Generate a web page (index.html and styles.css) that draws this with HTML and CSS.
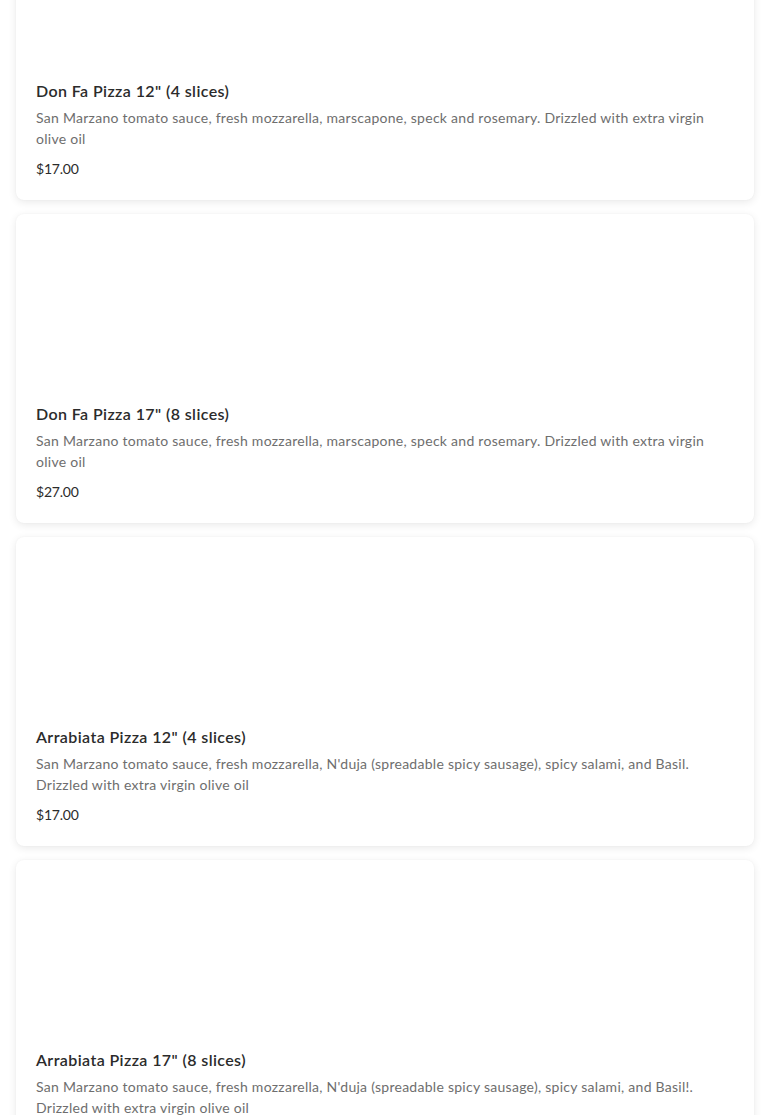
FILE: index.html
```html
<!DOCTYPE html>
<html>
<head>
<meta charset="utf-8">
<link rel="stylesheet" href="styles.css">
</head>
<body>
<div class="list">
  <div class="card">
    <div class="media"></div>
    <div class="body">
      <h3 class="title">Don Fa Pizza 12" (4 slices)</h3>
      <p class="desc">San Marzano tomato sauce, fresh mozzarella, marscapone, speck and rosemary. Drizzled with extra virgin olive oil</p>
      <p class="price">$17.00</p>
    </div>
  </div>
  <div class="card">
    <div class="media"></div>
    <div class="body">
      <h3 class="title">Don Fa Pizza 17" (8 slices)</h3>
      <p class="desc">San Marzano tomato sauce, fresh mozzarella, marscapone, speck and rosemary. Drizzled with extra virgin olive oil</p>
      <p class="price">$27.00</p>
    </div>
  </div>
  <div class="card">
    <div class="media"></div>
    <div class="body">
      <h3 class="title">Arrabiata Pizza 12" (4 slices)</h3>
      <p class="desc">San Marzano tomato sauce, fresh mozzarella, N'duja (spreadable spicy sausage), spicy salami, and Basil. Drizzled with extra virgin olive oil</p>
      <p class="price">$17.00</p>
    </div>
  </div>
  <div class="card">
    <div class="media"></div>
    <div class="body">
      <h3 class="title">Arrabiata Pizza 17" (8 slices)</h3>
      <p class="desc">San Marzano tomato sauce, fresh mozzarella, N'duja (spreadable spicy sausage), spicy salami, and Basil!. Drizzled with extra virgin olive oil</p>
      <p class="price">$27.00</p>
    </div>
  </div>
</div>
</body>
</html>
```
FILE: styles.css
```css
* { box-sizing: border-box; }
html, body { margin: 0; padding: 0; background: #ffffff; }
body {
  font-family: "Lato", "Liberation Sans", sans-serif;
  overflow: hidden;
  height: 1115px;
}
.list {
  display: flex;
  flex-direction: column;
  gap: 14px;
  padding: 0 16px;
  margin-top: -109px;
}
.card {
  background: #ffffff;
  border-radius: 8px;
  box-shadow: 0 2px 8px rgba(0, 0, 0, 0.09), 0 0 2px rgba(0, 0, 0, 0.04);
  overflow: hidden;
  height: 309px;
  display: flex;
  flex-direction: column;
}
.media {
  height: 170px;
  flex: none;
}
.body {
  padding: 19px 20px 22px;
}
.title {
  margin: 0;
  font-size: 16px;
  line-height: 22px;
  font-weight: 600;
  color: #2b2b2b;
  letter-spacing: 0.4px;
}
.desc {
  margin: 5px 0 0;
  font-size: 14px;
  line-height: 21px;
  color: #6e6e6e;
  letter-spacing: 0.27px;
}
.price {
  margin: 10px 0 0;
  font-size: 14px;
  line-height: 20px;
  color: #2b2b2b;
  letter-spacing: -0.2px;
}
```
